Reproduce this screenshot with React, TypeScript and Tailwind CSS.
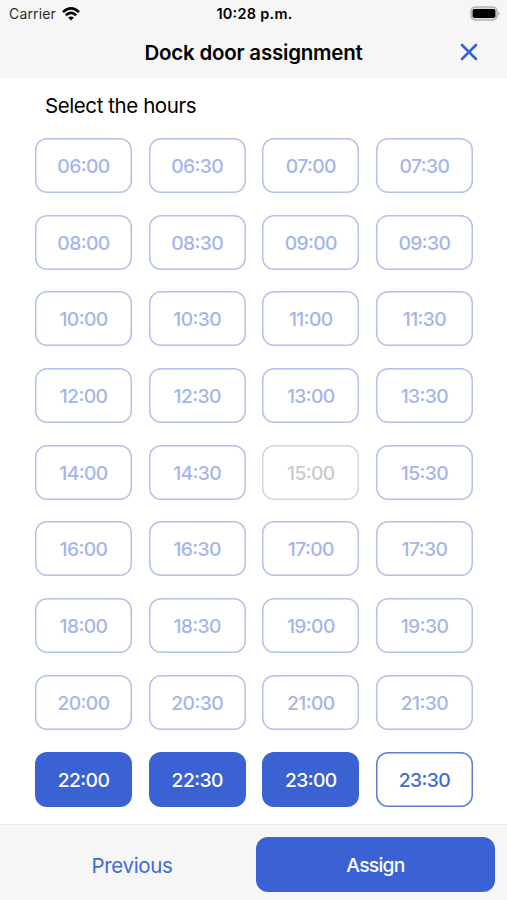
import { X } from "lucide-react";

type SlotState = "dimmed" | "disabled" | "selected" | "open";

const SELECTED = ["22:00", "22:30", "23:00"];
const DISABLED = ["15:00"];
const OPEN = ["23:30"];

const HOURS = Array.from({ length: 36 }, (_, i) => {
    const hour = 6 + Math.floor(i / 2);
    return `${hour.toString().padStart(2, "0")}:${i % 2 ? "30" : "00"}`;
});

const SLOT_STYLES: Record<SlotState, string> = {
    dimmed: "shadow-[inset_0_0_0_1.5px_#b4c2ec] text-[#a5b5e9]",
    disabled: "shadow-[inset_0_0_0_1.5px_#d6d6d6] text-[#cbcbcb]",
    selected: "bg-[#3a62d3] text-white",
    open: "shadow-[inset_0_0_0_1.5px_#5c7cd6] text-[#416ad2]",
};

function slotState(time: string): SlotState {
    if (SELECTED.includes(time)) return "selected";
    if (DISABLED.includes(time)) return "disabled";
    if (OPEN.includes(time)) return "open";
    return "dimmed";
}

function WifiIcon() {
    return (
        <svg width="18" height="14" viewBox="0 0 18 14" fill="none" stroke="#000" strokeWidth="2.6">
            <path d="M1 5.1 Q9 -2.2 17 5.1" />
            <path d="M3.8 8.2 Q9 3.4 14.2 8.2" />
            <path d="M9 13.6 L6.1 10.6 Q9 8.2 11.9 10.6 Z" fill="#000" stroke="none" />
        </svg>
    );
}

function BatteryIcon() {
    return (
        <svg width="30" height="15" viewBox="0 0 30 15" fill="none">
            <rect x="1" y="1" width="26" height="13" rx="4" fill="#dedede" stroke="#b4b4b4" strokeWidth="1.5" />
            <rect x="2.6" y="2.9" width="22.8" height="9.2" rx="1.8" fill="#000" />
            <path d="M28.2 5.4 Q29.8 6.1 29.8 7.5 Q29.8 8.9 28.2 9.6 Z" fill="#adadad" />
        </svg>
    );
}

export default function App() {
    return (
        <div className="flex h-[900px] w-[507px] flex-col overflow-hidden bg-white font-['Inter',sans-serif] text-black">
            <header className="h-[78px] shrink-0 bg-[#f6f6f6]">
                {/* Status bar */}
                <div className="grid h-[27px] grid-cols-3 items-center pr-[7px] pl-[9px] leading-none">
                    <div className="flex items-center gap-[6px] text-[14px] tracking-[0.15px] text-[#2b2b2b]">
                        Carrier
                        <WifiIcon />
                    </div>
                    <span className="pt-px text-center text-[14.5px] font-semibold tracking-[0.25px] [font-feature-settings:'case']">
                        10:28 p.m.
                    </span>
                    <div className="flex justify-end">
                        <BatteryIcon />
                    </div>
                </div>

                {/* Title */}
                <div className="grid h-[50px] grid-cols-[1fr_auto_1fr] items-center">
                    <h1 className="col-start-2 pt-[2px] text-[20.5px] font-semibold tracking-[-0.22px]">Dock door assignment</h1>
                    <button className="mr-[24px] justify-self-end">
                        <X className="size-7 text-[#3a62d3]" strokeWidth={2.3} />
                    </button>
                </div>
            </header>

            <main className="flex-1 pr-[34px] pl-[35px]">
                <h2 className="ml-[10px] pt-[13px] text-[20.5px] leading-[30px] tracking-[-0.42px]">Select the hours</h2>
                <div className="mt-[17px] grid grid-cols-4 gap-x-[16.6px] gap-y-[21.7px]">
                    {HOURS.map((time) => (
                        <button
                            key={time}
                            className={`h-[55px] rounded-[12px] pt-[2px] text-[19.3px] font-medium tracking-[-0.6px] [font-feature-settings:'case'] ${SLOT_STYLES[slotState(time)]}`}
                        >
                            {time}
                        </button>
                    ))}
                </div>
            </main>

            <footer className="flex h-[76px] shrink-0 items-start border-t border-[#ececec] bg-[#f6f6f6] pt-3 pr-3 pl-[8px]">
                <button className="h-[55px] flex-1 pt-[3px] text-[20.5px] tracking-[-0.35px] text-[#416ad2]">Previous</button>
                <button className="h-[55px] w-[239px] rounded-[12px] bg-[#3a62d3] pt-[2px] text-[19.3px] font-medium tracking-[-0.75px] text-white">
                    Assign
                </button>
            </footer>
        </div>
    );
}
